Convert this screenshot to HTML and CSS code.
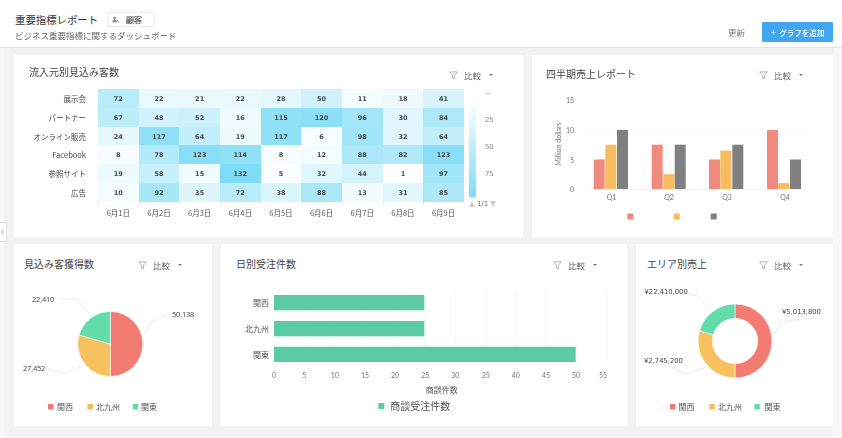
FILE: index.html
```html
<!DOCTYPE html>
<html lang="ja">
<head>
<meta charset="utf-8">
<title>重要指標レポート</title>
<link rel="stylesheet" href="styles.css">
</head>
<body>
<header class="topbar">
  <div class="topbar-left">
    <div class="title-row">
      <h1 class="page-title">重要指標レポート</h1>
      <span class="chip">
        <svg class="chip-icon" viewBox="0 0 8 8"><circle cx="3" cy="2.4" r="1.5"/><path d="M.5 7c0-1.8 1-2.6 2.5-2.6S5.500 5.200 5.500 7zM6 3.500l1.700 3.500H6.200z"/></svg>
        顧客
      </span>
    </div>
    <p class="subtitle">ビジネス重要指標に関するダッシュボード</p>
  </div>
  <div class="topbar-right">
    <span class="refresh">更新</span>
    <button class="add-btn"><span class="plus">+</span>グラフを追加</button>
  </div>
</header>

<button class="side-toggle" aria-label="toggle"><svg viewBox="0 0 6 10"><path d="M4 2 2 5l2 3"/></svg></button>

<main class="board">
  <div class="row">
    <section class="card card-heat">
      <div class="card-head">
        <h2 class="card-title title-heat">流入元別見込み客数</h2>
        <div class="compare">
          <svg class="funnel" viewBox="0 0 10 10"><path d="M.8 1h8.400L6 5v3.800L4 8V5z"/></svg>
          <span>比較</span><i class="caret"></i>
        </div>
      </div>
      <div class="heat-wrap">
        <div class="heat">
          <span class="heat-label">展示会</span>
          <b style="--v:72">72</b><b style="--v:22">22</b><b style="--v:21">21</b><b style="--v:22">22</b><b style="--v:28">28</b><b style="--v:50">50</b><b style="--v:11">11</b><b style="--v:18">18</b><b style="--v:41">41</b>
          <span class="heat-label">パートナー</span>
          <b style="--v:67">67</b><b style="--v:48">48</b><b style="--v:52">52</b><b style="--v:16">16</b><b style="--v:115">115</b><b style="--v:120">120</b><b style="--v:96">96</b><b style="--v:30">30</b><b style="--v:84">84</b>
          <span class="heat-label">オンライン販売</span>
          <b style="--v:24">24</b><b style="--v:117">117</b><b style="--v:64">64</b><b style="--v:19">19</b><b style="--v:117">117</b><b style="--v:6">6</b><b style="--v:98">98</b><b style="--v:32">32</b><b style="--v:64">64</b>
          <span class="heat-label">Facebook</span>
          <b style="--v:8">8</b><b style="--v:78">78</b><b style="--v:123">123</b><b style="--v:114">114</b><b style="--v:8">8</b><b style="--v:12">12</b><b style="--v:88">88</b><b style="--v:82">82</b><b style="--v:123">123</b>
          <span class="heat-label">参照サイト</span>
          <b style="--v:19">19</b><b style="--v:58">58</b><b style="--v:15">15</b><b style="--v:132">132</b><b style="--v:5">5</b><b style="--v:32">32</b><b style="--v:44">44</b><b style="--v:1">1</b><b style="--v:97">97</b>
          <span class="heat-label">広告</span>
          <b style="--v:10">10</b><b style="--v:92">92</b><b style="--v:35">35</b><b style="--v:72">72</b><b style="--v:38">38</b><b style="--v:88">88</b><b style="--v:13">13</b><b style="--v:31">31</b><b style="--v:85">85</b>
          <span></span>
          <span class="heat-date">6月1日</span><span class="heat-date">6月2日</span><span class="heat-date">6月3日</span><span class="heat-date">6月4日</span><span class="heat-date">6月5日</span><span class="heat-date">6月6日</span><span class="heat-date">6月7日</span><span class="heat-date">6月8日</span><span class="heat-date">6月9日</span>
        </div>
        <div class="scale">
          <div class="scale-main">
            <div class="scale-bar"></div>
            <div class="scale-labels">
              <svg class="scale-top" viewBox="0 0 6 3"><path d="M1 .5c0 2 4 2 4 0"/></svg>
              <span>25</span><span>50</span><span>75</span>
            </div>
          </div>
          <div class="pager"><i class="tri-up"></i><span>1/1</span><i class="tri-down"></i></div>
        </div>
      </div>
    </section>

    <section class="card card-quarter">
      <div class="card-head">
        <h2 class="card-title title-quarter">四半期売上レポート</h2>
        <div class="compare">
          <svg class="funnel" viewBox="0 0 10 10"><path d="M.8 1h8.400L6 5v3.800L4 8V5z"/></svg>
          <span>比較</span><i class="caret"></i>
        </div>
      </div>
      <svg class="chart" viewBox="532 89 301 148">
        <path class="grid" d="M580 100H813M580 130H813M580 160H813"/>
        <g class="axis-text" text-anchor="end">
          <text x="574" y="103">15</text><text x="574" y="133">10</text><text x="574" y="163">5</text><text x="574" y="192">0</text>
        </g>
        <text class="axis-text" transform="translate(561 144) rotate(-90)" text-anchor="middle">Million dollars</text>
        <path class="baseline" d="M587 189.500H806"/>
        <g class="q-red">
          <rect x="593.700" y="159.500" width="11" height="29.500"/><rect x="651.700" y="144.700" width="11" height="44.300"/><rect x="709" y="159.500" width="11" height="29.500"/><rect x="767" y="130" width="11" height="59"/>
        </g>
        <g class="q-yellow">
          <rect x="605.300" y="144.700" width="11" height="44.300"/><rect x="663.300" y="174.200" width="11" height="14.800"/><rect x="720.300" y="150.600" width="11" height="38.400"/><rect x="778.300" y="183.100" width="11" height="5.900"/>
        </g>
        <g class="q-gray">
          <rect x="617" y="130" width="11" height="59"/><rect x="674.700" y="144.700" width="11" height="44.300"/><rect x="732.300" y="144.700" width="11" height="44.300"/><rect x="790" y="159.500" width="11" height="29.500"/>
        </g>
        <g class="axis-text" text-anchor="middle">
          <text x="611.500" y="199.500">Q1</text><text x="669" y="199.500">Q2</text><text x="727" y="199.500">Q3</text><text x="785" y="199.500">Q4</text>
        </g>
        <rect class="q-red" x="627.300" y="213.500" width="6" height="6"/>
        <rect class="q-yellow" x="673.700" y="213.500" width="6" height="6"/>
        <rect class="q-gray" x="710.700" y="213.500" width="6" height="6"/>
      </svg>
    </section>
  </div>

  <div class="row">
    <section class="card card-pie">
      <div class="card-head">
        <h2 class="card-title title-pie">見込み客獲得数</h2>
        <div class="compare">
          <svg class="funnel" viewBox="0 0 10 10"><path d="M.8 1h8.400L6 5v3.800L4 8V5z"/></svg>
          <span>比較</span><i class="caret"></i>
        </div>
      </div>
      <svg class="chart" viewBox="14 278 198 148">
        <path class="leader" d="M58 299H77L91.700 316M166.700 315 151.700 321.700 143.300 335M45 368 63.300 373.300 83.300 366"/>
        <path class="s-red" d="M110.300 344V311.500A32.500 32.500 0 0 1 110.300 376.500Z"/>
        <path class="s-yellow" d="M110.300 344V376.500A32.500 32.500 0 0 1 79.100 335Z"/>
        <path class="s-green" d="M110.300 344 79.100 335A32.500 32.500 0 0 1 110.300 311.500Z"/>
        <g class="pie-text">
          <text x="32" y="302">22,410</text><text x="172" y="316.500">50,138</text><text x="23" y="370.500">27,452</text>
        </g>
        <g class="legend-text">
          <rect class="fill-red" x="48" y="404" width="5.500" height="5.500"/><text x="57" y="410">関西</text>
          <rect class="fill-yellow" x="87.500" y="404" width="5.500" height="5.500"/><text x="96" y="410">北九州</text>
          <rect class="fill-green" x="132.700" y="404" width="5.500" height="5.500"/><text x="141" y="410">関東</text>
        </g>
      </svg>
    </section>

    <section class="card card-orders">
      <div class="card-head">
        <h2 class="card-title title-orders">日別受注件数</h2>
        <div class="compare">
          <svg class="funnel" viewBox="0 0 10 10"><path d="M.8 1h8.400L6 5v3.800L4 8V5z"/></svg>
          <span>比較</span><i class="caret"></i>
        </div>
      </div>
      <svg class="chart" viewBox="221 278 406 148">
        <path class="grid" d="M304.200 290V363M334.400 290V363M364.600 290V363M394.800 290V363M425 290V363M455.700 290V363M486 290V363M516 290V363M546 290V363M576 290V363M607 290V363"/>
        <g class="h-bar">
          <rect x="274" y="295" width="150.300" height="15.300"/>
          <rect x="274" y="321" width="150.300" height="15.300"/>
          <rect x="274" y="346.700" width="301.700" height="15.300"/>
        </g>
        <g class="cat-text" text-anchor="end">
          <text x="269" y="305.700">関西</text><text x="269" y="331.700">北九州</text><text x="269" y="357.500">関東</text>
        </g>
        <g class="axis-text" text-anchor="middle">
          <text x="274" y="377.500">0</text><text x="304.300" y="377.500">5</text><text x="334.700" y="377.500">10</text><text x="365" y="377.500">15</text><text x="395" y="377.500">20</text><text x="425.300" y="377.500">25</text><text x="455.300" y="377.500">30</text><text x="485.700" y="377.500">35</text><text x="515.700" y="377.500">40</text><text x="546" y="377.500">45</text><text x="576" y="377.500">50</text><text x="603" y="377.500">55</text>
        </g>
        <text class="cat-text" x="441.700" y="393" text-anchor="middle">商談件数</text>
        <rect class="h-bar" x="378.300" y="403" width="6" height="6"/>
        <text class="orders-legend" x="390.300" y="410">商談受注件数</text>
      </svg>
    </section>

    <section class="card card-area">
      <div class="card-head">
        <h2 class="card-title title-area">エリア別売上</h2>
        <div class="compare">
          <svg class="funnel" viewBox="0 0 10 10"><path d="M.8 1h8.400L6 5v3.800L4 8V5z"/></svg>
          <span>比較</span><i class="caret"></i>
        </div>
      </div>
      <svg class="chart" viewBox="636 278 197 148">
        <path class="leader" d="M688 294 698 296 711 310M815 318 781.700 321.700 773 336.700M673 368 687 374 707 366.700"/>
        <path class="s-red" d="M735 304A37 37 0 0 1 735 378V363.700A22.700 22.700 0 0 0 735 318.300Z"/>
        <path class="s-yellow" d="M735 378A37 37 0 0 1 699.500 330.800L713.200 334.700A22.700 22.700 0 0 0 735 363.700Z"/>
        <path class="s-green" d="M699.500 330.800A37 37 0 0 1 735 304V318.300A22.700 22.700 0 0 0 713.200 334.700Z"/>
        <g class="donut-text">
          <text x="644.500" y="293.500">¥22,410,000</text><text x="782" y="314">¥5,013,800</text><text x="644" y="363">¥2,745,200</text>
        </g>
        <g class="legend-text">
          <rect class="fill-red" x="670" y="404" width="5.500" height="5.500"/><text x="678.600" y="410">関西</text>
          <rect class="fill-yellow" x="709.300" y="404" width="5.500" height="5.500"/><text x="718" y="410">北九州</text>
          <rect class="fill-green" x="754.300" y="404" width="5.500" height="5.500"/><text x="764.600" y="410">関東</text>
        </g>
      </svg>
    </section>
  </div>
</main>
</body>
</html>
```

FILE: styles.css
```css
* { box-sizing: border-box; }
html, body { margin: 0; height: 100%; }
body {
  width: 842px;
  height: 438px;
  overflow: hidden;
  position: relative;
  background: #f3f3f3;
  color: #444;
  font-family: "Noto Sans CJK JP", "Noto Sans", sans-serif;
  filter: blur(.3px);
}
h1, h2, p { margin: 0; font-weight: 400; }

.topbar {
  height: 48px;
  background: #fff;
  border-bottom: 1px solid #e4e4e4;
  padding: 12px 9px 0 15px;
  display: flex;
  justify-content: space-between;
}
.title-row { display: flex; align-items: center; gap: 8px; height: 15px; }
.page-title { font-size: 10.400px; color: #333; line-height: 15px; width: 84px; white-space: nowrap; }
.chip {
  width: 48px;
  height: 15px;
  border: 1px solid #ececec;
  border-radius: 1px;
  font-size: 8px;
  color: #555;
  display: flex;
  align-items: center;
  gap: 7px;
  padding-left: 4px;
  -webkit-text-stroke: .2px #555;
}
.chip-icon { width: 7px; height: 7px; fill: #888; }
.subtitle { font-size: 8.500px; color: #666; margin-top: 1px; line-height: 14px; white-space: nowrap; }
.topbar-right { display: flex; align-items: flex-start; gap: 17px; padding-top: 10px; }
.refresh { font-size: 8.500px; color: #777; line-height: 20px; }
.add-btn {
  width: 71px;
  height: 20px;
  border: 0;
  border-radius: 1px;
  background: #42a5f0;
  color: #fff;
  font: 500 7.500px "Noto Sans CJK JP", sans-serif;
  padding: 0;
  display: flex;
  align-items: center;
  justify-content: center;
  gap: 3px;
}
.plus { font-size: 10px; font-weight: 300; line-height: 1; }

.side-toggle {
  position: absolute;
  left: 0;
  top: 222px;
  width: 7px;
  height: 20px;
  padding: 0;
  background: #fff;
  border: 1px solid #e2e2e2;
  border-left: 0;
}
.side-toggle svg { display: block; width: 5px; height: 8px; fill: none; stroke: #999; stroke-width: 1; }

.board {
  height: 390px;
  padding: 7px 0 0 10px;
  border-left: 4px solid #f9f9f9;
  border-right: 9px solid #f7f7f7;
  display: flex;
  flex-direction: column;
  gap: 7px;
}
.row { display: flex; gap: 9px; height: 182px; }
.card { background: #fff; display: flex; flex-direction: column; }
.card-heat { width: 509px; }
.card-quarter { width: 301px; }
.card-pie { width: 198px; }
.card-orders { width: 406px; }
.card-area { width: 197px; }

.card-head {
  display: flex;
  justify-content: space-between;
  padding-right: 30px;
  height: 34px;
  flex: none;
}
.card-title { font-size: 10px; color: #444; line-height: 14px; white-space: nowrap; }
.title-heat { padding: 10px 0 0 15px; }
.title-quarter { padding: 12px 0 0 14px; }
.title-pie { padding: 13px 0 0 10px; }
.title-orders { padding: 13px 0 0 15px; }
.title-area { padding: 13px 0 0 11px; }

.compare {
  display: flex;
  align-items: center;
  height: 12px;
  margin-top: 14px;
  font-size: 8.500px;
  color: #666;
}
.card-pie .compare, .card-orders .compare, .card-area .compare { margin-top: 15px; }
.funnel { width: 9px; height: 9px; margin-right: 6px; fill: none; stroke: #999; stroke-width: .8; }
.caret {
  width: 0;
  height: 0;
  margin-left: 8px;
  border: 2px solid transparent;
  border-top: 2.500px solid #777;
  border-bottom: 0;
}

.heat-wrap { display: flex; }
.heat {
  display: grid;
  grid-template-columns: 84px repeat(9, 40.670px);
  grid-template-rows: repeat(6, 18.800px) 20px;
}
.heat-label {
  font-size: 7.500px;
  color: #444;
  text-align: right;
  padding-right: 12px;
  line-height: 20px;
  white-space: nowrap;
}
.heat b {
  font: 700 6.500px/20px "DejaVu Sans", sans-serif;
  color: #4a4a4a;
  text-align: center;
  background: color-mix(in srgb, #7fdcf5 calc(var(--v) * .757%), #fff);
}
.heat-date {
  font-size: 7.500px;
  color: #555;
  text-align: center;
  line-height: 22px;
  background: linear-gradient(#e6eaee, #e6eaee) 0 0 / 1px 3px no-repeat;
}

.scale { margin-left: 5px; width: 36px; display: flex; flex-direction: column; }
.scale-main { display: flex; height: 111px; }
.scale-bar {
  width: 7px;
  height: 97px;
  margin-top: 11px;
  background: linear-gradient(#fff, #7fdcf5);
}
.scale-labels {
  position: relative;
  margin-left: 9px;
  padding-top: 25px;
  display: flex;
  flex-direction: column;
  gap: 15px;
  font: 7px/12px "DejaVu Sans", sans-serif;
  color: #888;
}
.scale-top { position: absolute; top: 3px; left: 0; width: 6px; height: 3px; fill: none; stroke: #999; stroke-width: .8; }
.pager {
  display: flex;
  align-items: center;
  gap: 2px;
  height: 8px;
  font: 7px/8px "DejaVu Sans", sans-serif;
  color: #666;
}
.tri-up, .tri-down { width: 0; height: 0; border: 3px solid transparent; }
.tri-up { border-top: 0; border-bottom: 6px solid #ccc; }
.tri-down { border-bottom: 0; border-top: 6px solid #ccc; }

.chart { display: block; width: 100%; height: 148px; }
.grid { fill: none; stroke: #f5f5f5; stroke-width: .8; }
.baseline { stroke: #ececec; stroke-width: .8; fill: none; }
.axis-text { font: 7px "Lato", "Open Sans", sans-serif; fill: #777; }
.q-red { fill: #f08a7e; }
.q-yellow { fill: #f6bc5e; }
.q-gray { fill: #808080; }
.s-red { fill: #f27b72; stroke: #fff; stroke-width: .6; }
.s-yellow { fill: #f8c160; stroke: #fff; stroke-width: .6; }
.s-green { fill: #62dca8; stroke: #fff; stroke-width: .6; }
.fill-red { fill: #ee7b74; }
.fill-yellow { fill: #f6bd60; }
.fill-green { fill: #62dca8; }
.leader { fill: none; stroke: #e4e4e4; stroke-width: .8; }
.pie-text { font: 7.500px "Open Sans", sans-serif; fill: #444; letter-spacing: -.2px; }
.donut-text { font: 6.800px "DejaVu Sans", sans-serif; fill: #444; }
.legend-text { font-size: 8px; fill: #555; }
.h-bar { fill: #5ccba3; }
.cat-text { font-size: 8px; fill: #555; }
.orders-legend { font-size: 10px; fill: #555; }
```
